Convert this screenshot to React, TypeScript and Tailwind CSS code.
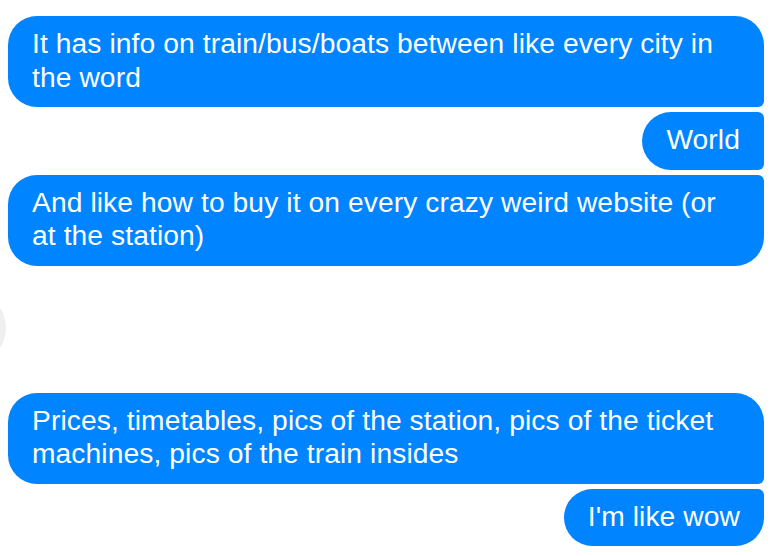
import React from "react";

type Corner = "first" | "middle" | "last" | "single";

function Bubble({ text, pos }: { text: string; pos: Corner }) {
  const corners =
    pos === "first"
      ? "rounded-tl-[29px] rounded-bl-[29px] rounded-tr-[29px] rounded-br-[6px]"
      : pos === "middle"
      ? "rounded-tl-[29px] rounded-bl-[29px] rounded-tr-[6px] rounded-br-[6px]"
      : pos === "last"
      ? "rounded-tl-[29px] rounded-bl-[29px] rounded-tr-[6px] rounded-br-[29px]"
      : "rounded-[29px]";
  return (
    <div className="flex justify-end">
      <div
        className={`max-w-full bg-[#0084ff] text-white pl-[24px] pr-[24px] pt-[11px] pb-[13px] text-[28.2px] leading-[33.5px] tracking-[0.1px] ${corners}`}
      >
        {text}
      </div>
    </div>
  );
}

export default function App() {
  return (
    <div
      className="w-[774px] h-[556px] bg-white overflow-hidden flex flex-col pt-[16px] pl-[8px] pr-[10px]"
      style={{ fontFamily: '"Liberation Sans", Arial, sans-serif' }}
    >
      <div className="flex flex-col gap-[5px]">
        <Bubble
          pos="first"
          text="It has info on train/bus/boats between like every city in the word"
        />
        <Bubble pos="middle" text="World" />
        <Bubble
          pos="last"
          text="And like how to buy it on every crazy weird website (or at the station)"
        />
      </div>
      <div className="relative h-[127px] shrink-0">
        <div className="absolute left-[-74px] top-[26px] w-[72px] h-[72px] rounded-full bg-[#efefef]" />
      </div>
      <div className="flex flex-col gap-[5px]">
        <Bubble
          pos="first"
          text="Prices, timetables, pics of the station, pics of the ticket machines, pics of the train insides"
        />
        <Bubble pos="last" text="I'm like wow" />
      </div>
    </div>
  );
}
